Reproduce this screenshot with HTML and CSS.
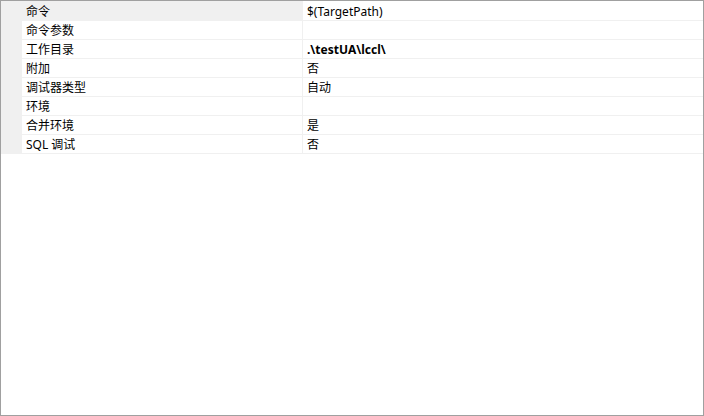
FILE: index.html
```html
<!DOCTYPE html>
<html lang="zh-CN">
<head>
<meta charset="utf-8">
<link rel="stylesheet" href="styles.css">
</head>
<body>
<div class="window">
  <div class="grid">
    <div class="row selected"><div class="margin"></div><div class="name">命令</div><div class="value">$(TargetPath)</div></div>
    <div class="row"><div class="margin"></div><div class="name">命令参数</div><div class="value"></div></div>
    <div class="row"><div class="margin"></div><div class="name">工作目录</div><div class="value bold">.\testUA\lccl\</div></div>
    <div class="row"><div class="margin"></div><div class="name">附加</div><div class="value">否</div></div>
    <div class="row"><div class="margin"></div><div class="name">调试器类型</div><div class="value">自动</div></div>
    <div class="row"><div class="margin"></div><div class="name">环境</div><div class="value"></div></div>
    <div class="row"><div class="margin"></div><div class="name">合并环境</div><div class="value">是</div></div>
    <div class="row"><div class="margin"></div><div class="name">SQL 调试</div><div class="value">否</div></div>
  </div>
</div>
</body>
</html>
```
FILE: styles.css
```css
html, body {
  margin: 0;
  padding: 0;
  background: #ffffff;
}
.window {
  width: 704px;
  height: 416px;
  box-sizing: border-box;
  border: 1px solid #a0a0a0;
  background: #ffffff;
  font-family: "Noto Sans", "Noto Sans CJK SC", sans-serif;
  font-size: 12px;
  color: #000000;
}
.grid {
  display: flex;
  flex-direction: column;
}
.row {
  display: grid;
  grid-template-columns: 21px 281px 1fr;
  height: 19px;
}
.row:first-child {
  height: 20px;
}
.margin {
  background: #f0f0f0;
}
.name, .value {
  border-bottom: 1px solid #f0f0f0;
  padding-left: 4px;
  padding-top: 1px;
  box-sizing: border-box;
  display: flex;
  align-items: center;
  white-space: nowrap;
  line-height: 17px;
}
.name {
  border-right: 1px solid #f0f0f0;
}
.selected .name {
  background: #f0f0f0;
}
.bold {
  font-weight: bold;
}
```
